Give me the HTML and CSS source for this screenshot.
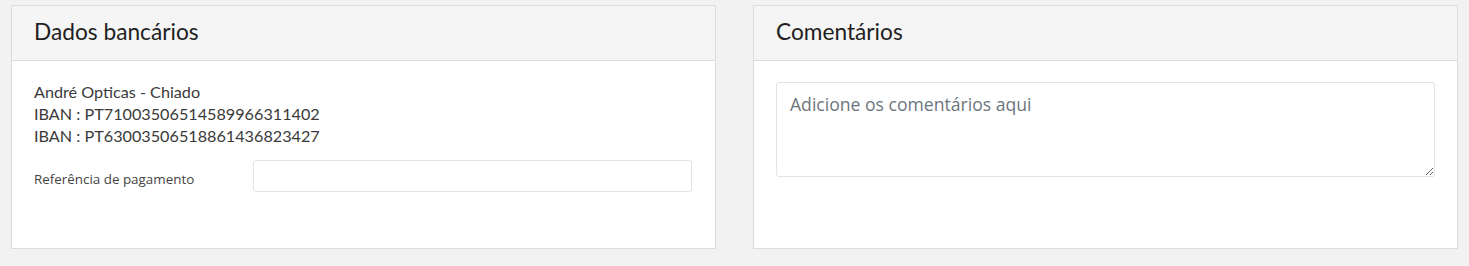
FILE: index.html
```html
<!DOCTYPE html>
<html lang="pt">
<head>
<meta charset="utf-8">
<title>Dados</title>
<link rel="stylesheet" href="styles.css">
</head>
<body>
<div class="page">
  <section class="card">
    <header class="card-header"><h2 class="card-title">Dados bancários</h2></header>
    <div class="card-body">
      <div class="bank-info">
        <div>André Opticas - Chiado</div>
        <div>IBAN : PT71003506514589966311402</div>
        <div>IBAN : PT63003506518861436823427</div>
      </div>
      <div class="form-row">
        <label class="form-label" for="ref">Referência de pagamento</label>
        <input class="form-input" id="ref" type="text">
      </div>
    </div>
  </section>
  <section class="card">
    <header class="card-header"><h2 class="card-title">Comentários</h2></header>
    <div class="card-body">
      <textarea class="comments" placeholder="Adicione os comentários aqui"></textarea>
    </div>
  </section>
</div>
</body>
</html>
```
FILE: styles.css
```css
html, body {
  margin: 0;
  padding: 0;
  background: #f2f2f2;
}
body {
  font-family: Lato, "Open Sans", sans-serif;
  color: #333;
}
.page {
  display: grid;
  grid-template-columns: 1fr 1fr;
  column-gap: 37px;
  padding: 5px 11px 0 11px;
}
.card {
  background: #fff;
  border: 1px solid #dcdcdc;
  height: 244px;
  box-sizing: border-box;
  display: flex;
  flex-direction: column;
}
.card-header {
  background: #f5f5f5;
  border-bottom: 1px solid #dcdcdc;
  height: 55px;
  box-sizing: border-box;
  display: flex;
  align-items: center;
  padding: 0 22px;
}
.card-title {
  margin: 0;
  font-size: 22.7px;
  font-weight: 400;
  color: #1f1f1f;
  line-height: 1;
  padding-bottom: 2px;
}
.card-body {
  padding: 20px 22px;
}
.bank-info {
  font-size: 16.2px;
  line-height: 22px;
  color: #3a3a3a;
}
.form-row {
  display: flex;
  align-items: center;
  margin-top: 13px;
}
.form-label {
  width: 219px;
  font-family: "Open Sans", sans-serif;
  font-size: 13.4px;
  color: #444;
  padding-top: 6px;
}
.form-input {
  width: 439px;
  height: 32px;
  box-sizing: border-box;
  border: 1px solid #e3e3e3;
  border-radius: 3px;
  background: #fff;
  margin: 0;
}
.comments {
  display: block;
  width: 100%;
  height: 95px;
  box-sizing: border-box;
  border: 1px solid #e3e3e3;
  border-radius: 3px;
  padding: 9px 13px;
  margin: 1px 0 0 0;
  font-family: "Open Sans", sans-serif;
  font-size: 17.6px;
  line-height: 24px;
  resize: vertical;
}
.comments::placeholder {
  color: #6c757d;
}
```
